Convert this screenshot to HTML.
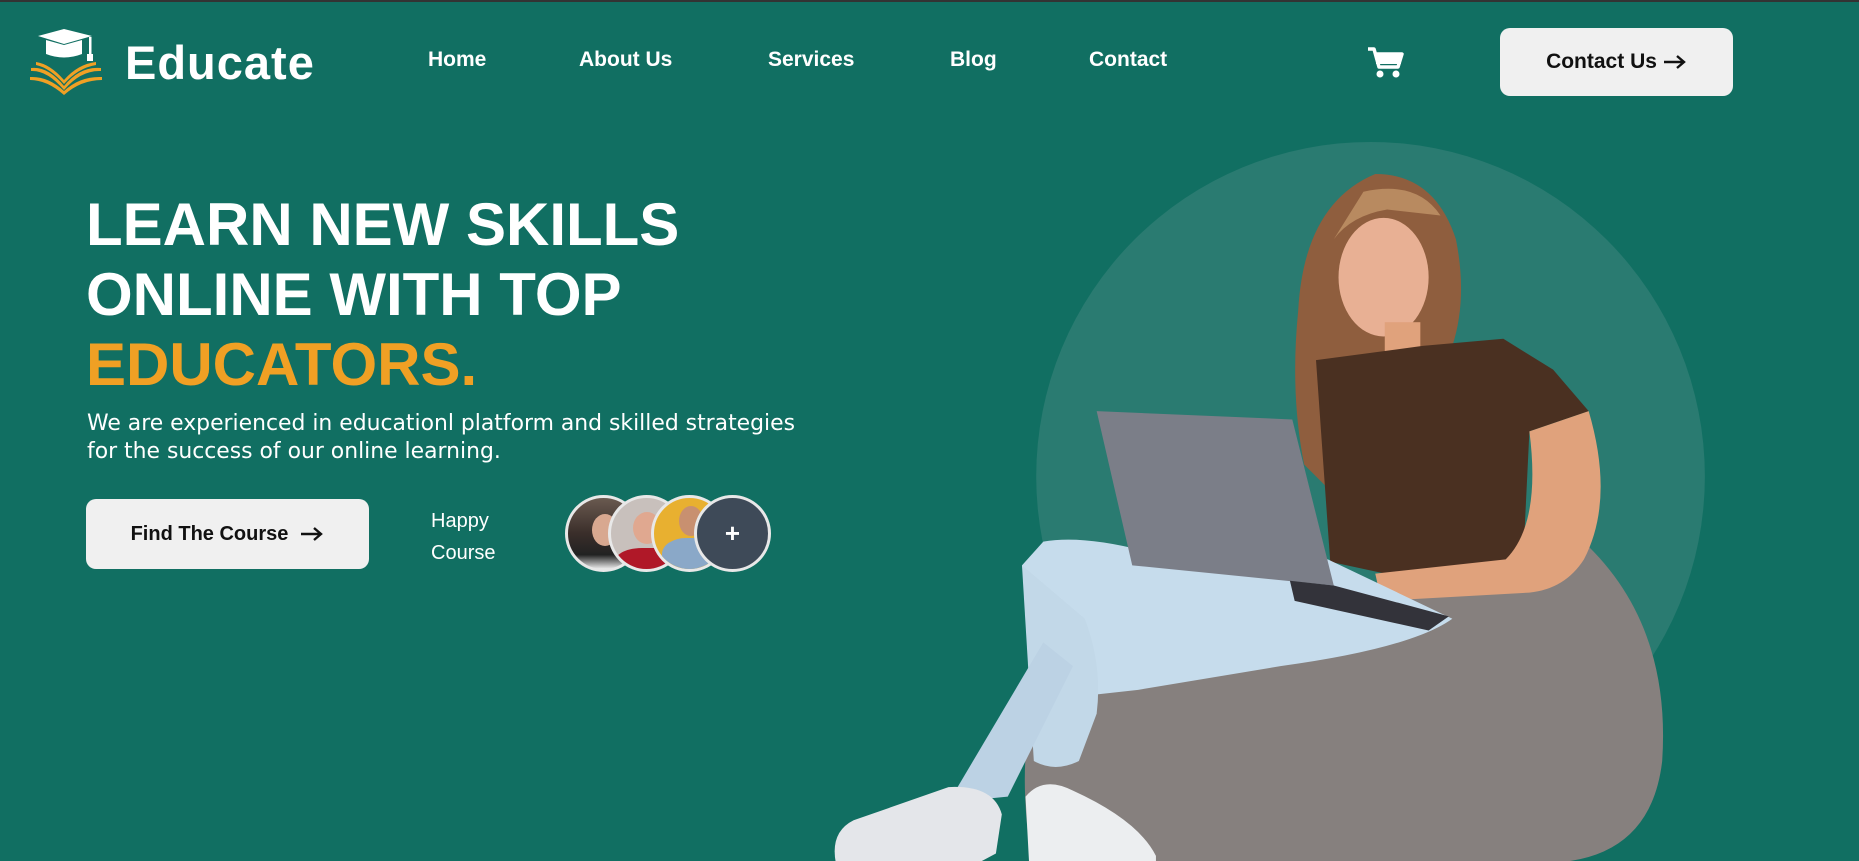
<!DOCTYPE html>
<html><head><meta charset="utf-8"><style>
*{margin:0;padding:0;box-sizing:border-box}
html,body{width:1859px;height:861px;overflow:hidden}
body{background:#116f62;font-family:"Liberation Sans",Arial,sans-serif;position:relative;border-top:2px solid #333}
.abs{position:absolute}
.nav a{position:absolute;top:46px;color:#fff;font-weight:bold;font-size:21px;text-decoration:none}
h1{position:absolute;left:86px;top:188px;font-size:60px;line-height:70px;color:#fff;font-weight:bold;white-space:nowrap}
h1 span{color:#f0a024}
.p{left:87px;top:408px;color:#fff;font-family:"DejaVu Sans",sans-serif;font-size:21.9px;line-height:28px;white-space:nowrap}
.btn{background:#f0f0f0;border-radius:10px;color:#111;font-weight:bold;display:flex;align-items:center;justify-content:center}
.av{width:77px;height:77px;border-radius:50%;border:3px solid #e8e8e8;top:493px;overflow:hidden}
</style></head><body>
<svg class="abs" style="left:26px;top:26px" width="80" height="70" viewBox="0 0 80 70">
<path d="M12 8 L38 1 L66 8 L38 16 Z" fill="#fff"/>
<path d="M20 12 L20 26 Q38 33 56 26 L56 12 L38 17 Z" fill="#fff"/>
<rect x="63" y="9" width="2.5" height="18" fill="#fff"/><rect x="61" y="26" width="6" height="7" fill="#fff"/>
<path d="M5 40 Q22 38 38 58 Q54 38 75 40 L75 43 Q55 42 38 62 Q21 42 5 43 Z" fill="#f0a024"/>
<path d="M4 49 Q22 48 38 63 Q54 48 76 49 L76 52 Q55 52 38 67 Q21 52 4 52 Z" fill="#f0a024"/>
<path d="M10 34 Q24 36 38 52 Q52 36 70 34 L70 37 Q52 40 38 56 Q24 40 10 37 Z" fill="#f0a024"/>
</svg>
<div class="abs" style="left:125px;top:33px;color:#fff;font-weight:bold;font-size:47px;letter-spacing:1px">Educate</div>
<div class="nav">
<a style="left:428px">Home</a><a style="left:579px">About Us</a><a style="left:768px">Services</a><a style="left:950px">Blog</a><a style="left:1089px">Contact</a>
</div>
<svg class="abs" style="left:1367px;top:45px" width="38" height="32" viewBox="0 0 38 32">
<path d="M1 2 H7 L12 20 H31 L35 7 H9" fill="none" stroke="#fff" stroke-width="3.5" stroke-linejoin="round"/>
<rect x="9" y="7" width="25" height="10" fill="#fff"/>
<circle cx="13" cy="27" r="3.5" fill="#fff"/><circle cx="29" cy="27" r="3.5" fill="#fff"/>
</svg>
<div class="abs btn" style="left:1500px;top:26px;width:233px;height:68px;font-size:21px">Contact Us<svg width="24" height="16" viewBox="0 0 24 16" style="margin-left:6px"><path d="M1 8 H21 M14 2 L21 8 L14 14" fill="none" stroke="#111" stroke-width="2.4"/></svg></div>

<h1>LEARN NEW SKILLS<br>ONLINE WITH TOP<br><span>EDUCATORS.</span></h1>
<div class="abs p">We are experienced in educationl platform and skilled strategies<br>for the success of our online learning.</div>
<div class="abs btn" style="left:86px;top:497px;width:283px;height:70px;font-size:20px">Find The Course<svg width="24" height="16" viewBox="0 0 24 16" style="margin-left:12px"><path d="M1 8 H21 M14 2 L21 8 L14 14" fill="none" stroke="#111" stroke-width="2.4"/></svg></div>
<div class="abs" style="left:431px;top:503px;color:#fff;font-size:20px;line-height:32px">Happy<br>Course</div>

<div class="abs av" style="left:565px;background:linear-gradient(#6a5a50,#3a2e2a 50%,#222 80%,#eee)"><div style="position:absolute;left:24px;top:16px;width:26px;height:32px;border-radius:50%;background:#d8a890"></div></div>
<div class="abs av" style="left:608px;background:#c8c0bc"><div style="position:absolute;left:22px;top:14px;width:28px;height:32px;border-radius:50%;background:#e0a890"></div><div style="position:absolute;left:5px;top:50px;width:65px;height:30px;border-radius:40% 40% 0 0;background:#b01828"></div></div>
<div class="abs av" style="left:651px;background:#e8b030"><div style="position:absolute;left:25px;top:8px;width:24px;height:30px;border-radius:50%;background:#c89070"></div><div style="position:absolute;left:8px;top:40px;width:60px;height:40px;border-radius:40% 40% 0 0;background:#8aa8c8"></div></div>
<div class="abs av" style="left:694px;background:#3e4a58;color:#fff;font-size:26px;font-weight:bold;display:flex;align-items:center;justify-content:center">+</div>

<svg class="abs" style="left:0;top:0" width="1859" height="861" viewBox="0 0 1568 726" preserveAspectRatio="none">
<circle cx="1156" cy="400" r="282" fill="#2a7b71"/>
<path d="M870 726 Q855 620 880 580 L1150 520 Q1260 430 1330 450 Q1410 520 1402 640 Q1392 726 1300 726 Z" fill="#86807e"/>
<path d="M1160 145 Q1210 145 1228 200 Q1238 250 1225 290 L1200 300 L1140 330 Q1120 380 1130 420 L1100 390 Q1088 330 1095 260 Q1100 170 1160 145 Z" fill="#8f5e3e"/>
<path d="M1150 160 Q1195 150 1215 180 L1170 175 Q1140 180 1125 200 Z" fill="#b88a60"/>
<ellipse cx="1167" cy="232" rx="38" ry="50" fill="#e8b094"/>
<rect x="1168" y="270" width="30" height="30" fill="#e0a27c"/>
<path d="M1110 302 L1200 290 L1268 284 L1310 310 L1340 345 L1290 362 L1285 465 L1215 492 L1122 472 Z" fill="#4a3021"/>
<path d="M1290 362 L1340 345 Q1362 420 1336 470 Q1320 495 1290 498 L1165 505 L1160 482 L1270 470 Q1300 440 1290 362 Z" fill="#e0a27c"/>
<path d="M880 455 Q920 448 990 470 L1120 470 L1225 520 Q1190 545 1080 560 L960 580 L915 585 Q880 560 862 475 Z" fill="#c6dcec"/>
<path d="M915 520 Q930 560 925 600 L910 640 Q890 650 872 640 L862 475 Z" fill="#c2d8e8"/>
<path d="M880 540 L905 560 L850 670 L800 675 Z" fill="#bcd2e4"/>
<path d="M925 345 L1090 352 L1125 492 L955 475 Z" fill="#7b7e88"/>
<path d="M1088 488 L1125 492 L1222 518 L1205 530 L1092 505 Z" fill="#33333a"/>
<path d="M868 726 L865 670 Q880 652 905 665 Q960 690 975 720 L975 726 Z" fill="#eceef0"/>
<path d="M705 726 Q700 700 720 690 L800 662 Q838 660 845 685 L840 718 L825 726 Z" fill="#e4e6ea"/>
</svg>
</body></html>
